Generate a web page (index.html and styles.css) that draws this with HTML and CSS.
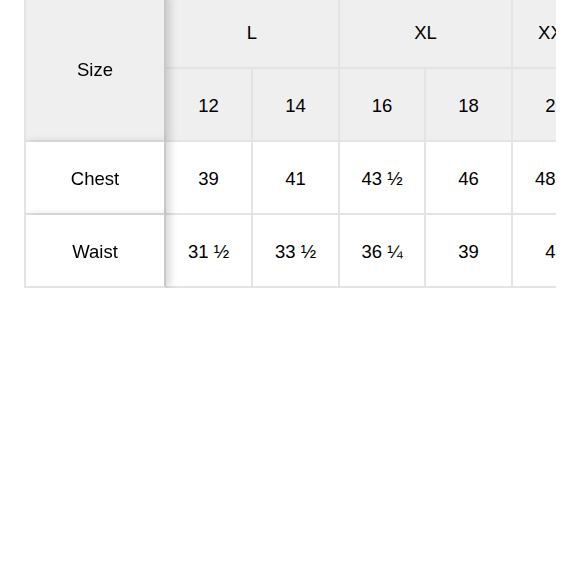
FILE: index.html
```html
<!DOCTYPE html>
<html lang="en">
<head>
<meta charset="utf-8">
<title>Size chart</title>
<link rel="stylesheet" href="styles.css">
</head>
<body>
<div class="chart">
  <table class="sizes">
    <colgroup>
      <col class="c-label">
      <col class="c-87"><col class="c-87"><col class="c-86"><col class="c-87"><col class="c-87"><col class="c-87">
    </colgroup>
    <thead>
      <tr>
        <th class="label" rowspan="2">Size</th>
        <th colspan="2">L</th>
        <th colspan="2">XL</th>
        <th>XXL</th>
        <th>XXL</th>
      </tr>
      <tr>
        <th>12</th><th>14</th><th>16</th><th>18</th><th>20</th><th>22</th>
      </tr>
    </thead>
    <tbody>
      <tr>
        <th class="label">Chest</th>
        <td>39</td><td>41</td><td>43 ½</td><td>46</td><td>48 ½</td><td>51</td>
      </tr>
      <tr class="last">
        <th class="label">Waist</th>
        <td>31 ½</td><td>33 ½</td><td>36 ¼</td><td>39</td><td>41</td><td>44</td>
      </tr>
    </tbody>
  </table>
</div>
</body>
</html>
```
FILE: styles.css
```css
html, body {
  margin: 0;
  padding: 0;
  background: #ffffff;
}

body {
  font-family: "Liberation Sans", Arial, Helvetica, sans-serif;
  color: #000000;
}

.chart {
  width: 532px;
  margin: -4px 0 0 24px;
  overflow: hidden;
}

.sizes {
  border-collapse: separate;
  border-spacing: 0;
  table-layout: fixed;
  width: 663px;
}

.c-label { width: 142px; }
.c-87 { width: 87px; }
.c-86 { width: 86px; }

.sizes th,
.sizes td {
  box-sizing: border-box;
  height: 73px;
  padding: 3px 0 0;
  text-align: center;
  vertical-align: middle;
  font-size: 18.5px;
  font-weight: normal;
  line-height: 22px;
  border-right: 2px solid #e4e4e4;
  border-bottom: 2px solid #e4e4e4;
}

.sizes thead th {
  background: #efefef;
}

.sizes td,
.sizes tbody th {
  background: #ffffff;
}

.sizes .label {
  position: sticky;
  left: 0;
  z-index: 2;
  border-left: 2px solid #e4e4e4;
  border-right: 2px solid #c8c8c8;
  box-shadow: 4px 0 8px rgba(0, 0, 0, 0.16);
}

.sizes thead .label {
  height: 146px;
}
```
